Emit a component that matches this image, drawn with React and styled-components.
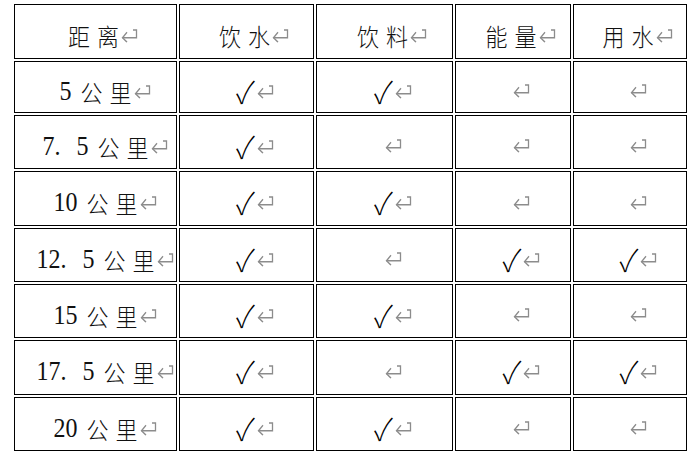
import React from "react";
import styled, { createGlobalStyle } from "styled-components";

const GlobalStyle = createGlobalStyle`
    body {
        margin: 0;
        background: #fff;
        color: #111;
    }
`;

const Page = styled.div`
    padding: 4px 0 0 14px;
`;

const Grid = styled.div`
    display: grid;
    grid-template-columns: 163px 135px 137px 116px 114px;
    grid-template-rows: 55px 52px 54px 55px 54px 54px 55px 54px;
    gap: 2px;
    width: max-content;
`;

const Cell = styled.div`
    box-sizing: border-box;
    border: 1px solid #000;
    display: flex;
    align-items: center;
    justify-content: center;
    padding-top: 7px;
`;

const Content = styled.div`
    display: flex;
    align-items: center;
    transform: scaleY(1.1);
`;

const Num = styled.span`
    font-family: "Liberation Serif", serif;
    font-size: 24px;
    word-spacing: 10px;
    margin-right: 9px;
`;

const Cjk = styled.span`
    font-family: "Noto Sans CJK SC", sans-serif;
    font-size: 22px;
    font-weight: 300;
    letter-spacing: 7px;
    margin-right: -7px;
    margin-left: ${(p) => (p.$head ? -4 : 0)}px;
`;

const Check = styled.span`
    font-family: "Noto Sans CJK SC", "DejaVu Sans", sans-serif;
    font-size: 28px;
    font-weight: 300;
    line-height: 1;
    color: #000;
    margin-left: -2px;
`;

const MarkSvg = styled.svg`
    width: 17px;
    height: 13px;
    margin-left: ${(p) => (p.$alone ? 0 : 2)}px;
    margin-right: ${(p) => (p.$alone ? -17 : -19)}px;
    flex-shrink: 0;
`;

function Mark({ alone }) {
    return (
        <MarkSvg $alone={alone} viewBox="0 0 17 13" fill="none" stroke="#8c8c8c" strokeWidth="1.3">
            <path d="M12 1.5 H15.5 V8.5 H1.5" />
            <path d="M6 3.5 L1.5 8.5 L6 12.5" />
        </MarkSvg>
    );
}

const header = ["距离", "饮水", "饮料", "能量", "用水"];

const rows = [
    ["5", 1, 1, 0, 0],
    ["7. 5", 1, 0, 0, 0],
    ["10", 1, 1, 0, 0],
    ["12. 5", 1, 0, 1, 1],
    ["15", 1, 1, 0, 0],
    ["17. 5", 1, 0, 1, 1],
    ["20", 1, 1, 0, 0],
];

export default function App() {
    return (
        <>
            <GlobalStyle />
            <Page>
                <Grid>
                    {header.map((h) => (
                        <Cell key={h}>
                            <Content>
                                <Cjk $head>{h}</Cjk>
                                <Mark />
                            </Content>
                        </Cell>
                    ))}
                    {rows.map((r) => (
                        <React.Fragment key={r[0]}>
                            <Cell>
                                <Content>
                                    <Num>{r[0]}</Num>
                                    <Cjk>公里</Cjk>
                                    <Mark />
                                </Content>
                            </Cell>
                            {r.slice(1).map((v, i) => (
                                <Cell key={i}>
                                    <Content>
                                        {v ? <Check>✓</Check> : null}
                                        <Mark alone={!v} />
                                    </Content>
                                </Cell>
                            ))}
                        </React.Fragment>
                    ))}
                </Grid>
            </Page>
        </>
    );
}
